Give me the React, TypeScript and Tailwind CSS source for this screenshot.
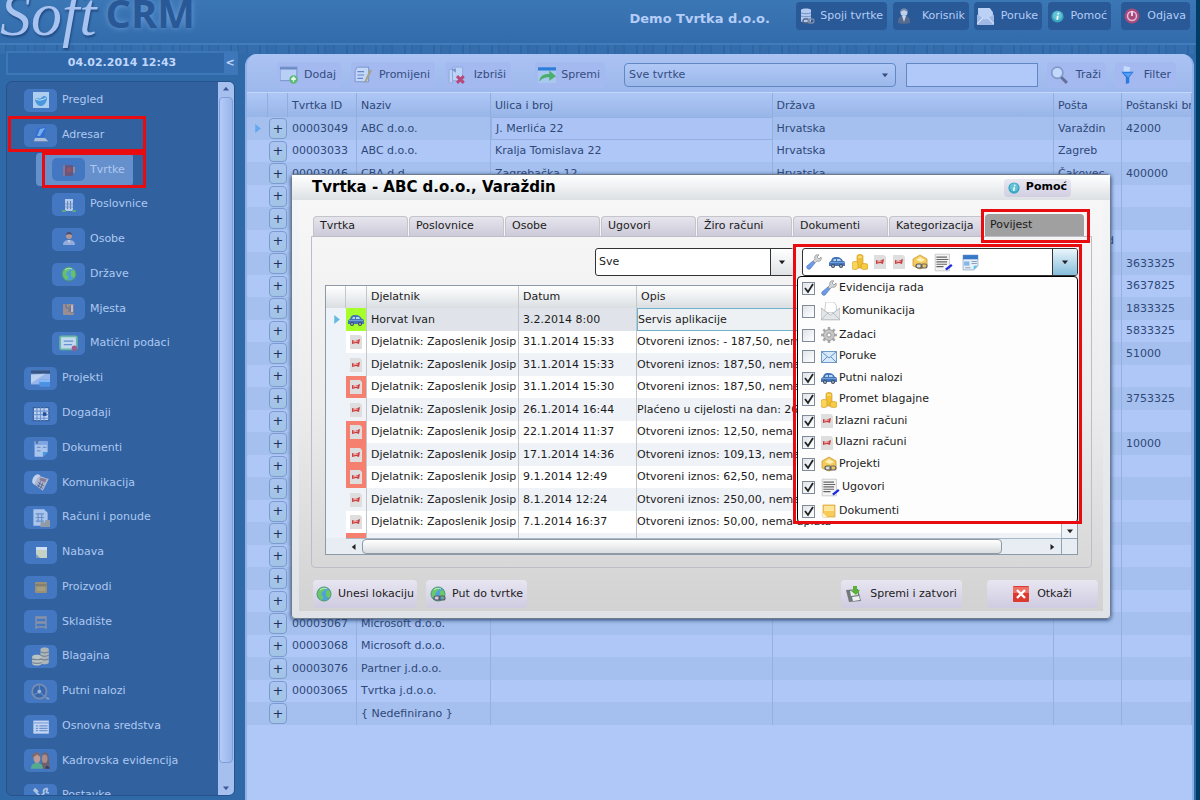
import { useState } from "react";
import type { ReactNode } from "react";
import clsx from "clsx";

type IconName =
  | "picture" | "laptop" | "book" | "building" | "person" | "globe" | "place" | "certificate"
  | "windows" | "calendar" | "doc" | "phone" | "invoice" | "note" | "box" | "shelf" | "coins"
  | "wheel" | "list" | "people" | "tools" | "server" | "user" | "mail" | "info" | "power"
  | "add" | "edit" | "remove" | "save" | "search" | "filter" | "wrench" | "car" | "gold"
  | "receipt" | "project" | "contract" | "page" | "openMail" | "gear" | "envelope" | "sticky"
  | "globeLink" | "disk" | "close";

const globe = (
  <>
    <circle cx="8" cy="8" r="7" fill="#4fa3d8" stroke="#4c9c66" />
    <path d="M2 6c1-3 4-5 6-4l1 2-3 2-1 3 2 1v3l-2 1C3 12 1 9 2 6zM10 5l3-1c2 3 2 6 0 8l-3-2z" fill="#6cc866" />
    <path d="M4 4c2-2 5-2 7-1" stroke="#c9efd2" fill="none" />
  </>
);

const ICONS: Record<IconName, ReactNode> = {
  picture: (
    <>
      <rect width="16" height="16" fill="#b9d8f5" />
      <path d="M2 8c2-4 4 0 6-2s4-3 6 0c0 4-3 8-6 8S3 12 2 8z" fill="#4a9be0" />
      <path d="M3 7c3 2 6 1 10-1" stroke="#e6f5ff" fill="none" />
    </>
  ),
  laptop: (
    <>
      <path d="M5 1 13 0l-2 10H2z" fill="#2e6fd6" />
      <path d="M7 2 12 1l-5 8H4z" fill="#7fb2f2" />
      <path d="M2 11h10l3 3H1z" fill="#b4c6e2" />
      <path d="M1 14h14v1H1z" fill="#7089b5" />
    </>
  ),
  book: (
    <>
      <rect x="3" y="3" width="9" height="11" rx="1" fill="#6c5578" />
      <rect x="2" y="3" width="2" height="11" fill="#8a7795" />
      <circle cx="8" cy="8" r="2.5" fill="#9d5261" />
      <path d="M12 5h2v6h-2z" fill="#9c8f92" />
    </>
  ),
  building: (
    <>
      <path d="M4 2h8v12H4z" fill="#bed3f0" />
      <path d="M6 4h1v8H6zM9 4h1v8H9z" fill="#6484b8" />
      <path d="M1 13h4v2H1zM11 13h4v2h-4z" fill="#5fae7c" />
      <path d="M4 7h8M4 10h8" stroke="#7f9ccd" />
    </>
  ),
  person: (
    <>
      <circle cx="8" cy="5" r="3" fill="#c29c8d" />
      <path d="M5 4c0-4 6-4 6 0l-3-1z" fill="#4e4763" />
      <path d="M2 14c0-4 3-5 6-5s6 1 6 5z" fill="#9cb2dc" />
      <path d="M7 9h2l-1 4z" fill="#d4e0f4" />
    </>
  ),
  globe,
  place: (
    <>
      <rect x="2" y="3" width="11" height="11" rx="1" fill="#a3928f" />
      <path d="M5 3v4h3v4M9 5h4v6h-3z" stroke="#6e6a87" fill="none" />
      <path d="M10 4h2v7h-2z" fill="#bdc6d6" />
    </>
  ),
  certificate: (
    <>
      <rect x="1" y="2" width="14" height="11" rx="1" fill="#cfe3f5" stroke="#6cc0a2" strokeWidth="1.5" />
      <path d="M4 6h8M4 9h7" stroke="#6b93d4" />
      <circle cx="13" cy="12" r="2.3" fill="#a7598a" />
    </>
  ),
  windows: (
    <>
      <rect x="0" y="1" width="16" height="12" fill="#9ebcf0" />
      <path d="M0 1h16v3H0z" fill="#34517f" />
      <path d="M0 5 12 4 0 12z" fill="#cadbf5" />
      <rect x="7" y="9" width="9" height="6" rx="1" fill="#4c94e8" />
      <path d="M7 9h9v2H7z" fill="#8dc0fa" />
    </>
  ),
  calendar: (
    <>
      <rect x="2" y="3" width="13" height="11" fill="#cfe0fa" stroke="#365c99" />
      <path d="M2 6h13M2 9h13M2 12h13M5 3v11M8 3v11M11 3v11" stroke="#7098d3" />
      <rect x="10" y="7" width="3" height="3" fill="#254d91" />
    </>
  ),
  doc: (
    <>
      <path d="M3 2h11v9l-4 4H3z" fill="#b5cdf1" />
      <path d="M3 2h11v3H3z" fill="#86abe8" />
      <path d="M10 15v-4h4z" fill="#3ea0e2" />
      <path d="M5 7h3M5 10h3M10 7h3" stroke="#7797cc" />
      <path d="M4 0h2v4H4z" fill="#56719f" />
    </>
  ),
  phone: (
    <>
      <path d="M6 2 15 5l-5 10-8-6z" fill="#b7bdd0" />
      <path d="M1 8c0-4 2-7 5-7l2 1C5 4 4 6 3 10z" fill="#cddcf3" />
      <path d="M8 4l5 1-1 3-5-2z" fill="#8e7d94" />
      <path d="M6 8l5 3M5 10l5 3M8 7l-2 5M10 8l-2 5" stroke="#5d688c" strokeWidth=".8" />
    </>
  ),
  invoice: (
    <>
      <path d="M2 1h9l3 3v11H2z" fill="#b6cef0" />
      <path d="M4 5h7M4 8h7M4 11h7M6 5v7M9 5v7" stroke="#6e94cb" />
      <path d="M8 12h4v4H8zM12 10h4v6h-4z" fill="#9aa0a6" />
    </>
  ),
  note: (
    <>
      <path d="M3 3h11v11H3z" fill="#d1dcc6" />
      <path d="M3 3h11v3H3z" fill="#dcebf6" />
      <path d="M3 10l4 4H3z" fill="#7fa6c0" />
    </>
  ),
  box: (
    <>
      <rect x="2" y="3" width="12" height="11" rx="1" fill="#a0936f" />
      <path d="M2 6h12" stroke="#75705f" />
      <rect x="4" y="8" width="8" height="4" fill="#b1a37b" />
    </>
  ),
  shelf: <path d="M3 2v13M13 2v13M3 4h10M3 9h10M3 13h10M4 8h8M4 3h8" stroke="#8e96a5" strokeWidth="1.4" fill="none" />,
  coins: (
    <>
      <path d="M8 2c0-2 7-2 7 0v11c0 2-7 2-7 0z" fill="#b9bcb5" />
      <path d="M1 8c0-2 8-2 8 0v6c0 2-8 2-8 0z" fill="#cacdc4" />
      <path d="M8 4c2 1 5 1 7 0M8 7c2 1 5 1 7 0M8 10c2 1 5 1 7 0M1 10c2 1 6 1 8 0M1 13c2 1 6 1 8 0" stroke="#7d8691" fill="none" />
    </>
  ),
  wheel: (
    <>
      <circle cx="7" cy="8" r="6" fill="#3766ad" stroke="#7f90ae" strokeWidth="1.5" />
      <circle cx="7" cy="8" r="1.6" fill="#a8bddd" />
      <path d="M7 2v4M2 11l4-2M8 9l5 5" stroke="#6d8fc4" />
      <path d="M12 12l4 2-2 1z" fill="#9da7b8" />
    </>
  ),
  list: (
    <>
      <path d="M2 3h13v11H2z" fill="#d0e0f8" />
      <path d="M2 5h13" stroke="#86a8dd" />
      <path d="M4 7.500h2M7 7.500h7M4 9.500h2M7 9.500h7M4 11.500h2M7 11.500h7" stroke="#7396cf" />
    </>
  ),
  people: (
    <>
      <path d="M9 5c0-6 6-5 6 1l1 9H9z" fill="#735f67" />
      <ellipse cx="11.500" cy="6.500" rx="2.400" ry="3.600" fill="#b99083" />
      <ellipse cx="5" cy="6" rx="2.800" ry="4" fill="#c9a08f" />
      <path d="M1 6c0-6 7-6 7-1L5 3z" fill="#85675f" />
      <path d="M0 15c0-4 2-5 5-5s5 1 5 5z" fill="#55b28a" />
      <path d="M12 15c0-4 3-3 4 0z" fill="#343f66" />
    </>
  ),
  tools: <path d="M2 3l12 12M3 2l3 3M14 2c-3 0-4 2-3 4L3 14M14 2l-1 3 2 1" stroke="#b9cbe8" strokeWidth="1.5" fill="none" />,
  server: (
    <>
      <path d="M2 2c0-2 10-2 10 0v11c0 2-10 2-10 0z" fill="#b4cbf1" />
      <path d="M2 5c3 1 7 1 10 0M2 8c3 1 7 1 10 0" stroke="#6f8dbd" fill="none" />
      <rect x="4" y="11" width="6" height="4" rx="2" fill="none" stroke="#51617f" strokeWidth="1.300" />
      <rect x="9" y="11" width="6" height="4" rx="2" fill="none" stroke="#7c8ca9" strokeWidth="1.300" />
    </>
  ),
  user: (
    <>
      <path d="M2 15c0-5 1-7 6-7s6 2 6 7c-2 1-10 1-12 0z" fill="#566b8f" />
      <circle cx="8" cy="4.500" r="3.500" fill="#c2cfe9" />
      <path d="M6 8h4l-2 6z" fill="#c8d6ee" />
      <path d="M4 4c0-5 8-5 8 0L8 2z" fill="#7085ad" />
    </>
  ),
  mail: (
    <>
      <path d="M1 0h11l3 4v11H1z" fill="#bcd1f6" />
      <path d="M0 6l8 5 8-5v10H0z" fill="#9fb8e4" />
      <path d="M0 15l6-6M16 15l-6-6" stroke="#dae7ff" />
    </>
  ),
  info: (
    <>
      <circle cx="8" cy="8" r="7.500" fill="#39a7c2" />
      <circle cx="8" cy="7" r="5.500" fill="#65c3d6" />
      <path d="M7.200 7h2.300l-1 5H6.700zM8.200 3.500h2l-.4 2h-2z" fill="#fff" />
    </>
  ),
  power: (
    <>
      <circle cx="8" cy="8" r="7.500" fill="#a94b78" />
      <circle cx="8" cy="8" r="4.500" fill="none" stroke="#e0b9dc" strokeWidth="1.500" />
      <path d="M8 3v5" stroke="#f1dff5" strokeWidth="1.800" />
    </>
  ),
  add: (
    <>
      <rect x="0" y="1" width="15" height="12" fill="#b9d0f6" stroke="#7d9ad0" />
      <path d="M0 1h15v2H0z" fill="#6e8ac5" />
      <circle cx="12" cy="12" r="3.700" fill="#5bb878" />
      <path d="M12 14v-4M10 12l2-2 2 2" stroke="#e5f8ed" strokeWidth="1.300" fill="none" />
    </>
  ),
  edit: (
    <>
      <path d="M3 1h10v13H1V4z" fill="#c3d7f8" stroke="#7592ca" strokeWidth=".8" />
      <path d="M3 5h6M3 8h6M3 11h5" stroke="#6686c6" />
      <path d="M14 3l2 1-5 10-2 1 1-3z" fill="#a8a384" />
    </>
  ),
  remove: (
    <>
      <path d="M4 1h9v12H4zM1 3h3v12H1z" fill="#bdd2f7" stroke="#8ba6d8" strokeWidth=".7" />
      <path d="M3 3l4-1v4z" fill="#7895cf" />
      <path d="M8 9l6 6M14 9l-6 6" stroke="#b8487c" strokeWidth="2.600" />
    </>
  ),
  save: (
    <>
      <path d="M0 1h16v14H0z" fill="#a9c8ee" />
      <path d="M0 1h16v3H0z" fill="#2f7ddb" />
      <path d="M1 14c1-6 4-7 9-7V4l6 5-6 4v-3c-4 0-6 1-9 4z" fill="#4aae6d" />
    </>
  ),
  search: (
    <>
      <circle cx="6.500" cy="6" r="5" fill="#c2d9fb" stroke="#8099c8" strokeWidth="1.500" />
      <path d="M10 10l5 5" stroke="#63709a" strokeWidth="2.600" />
    </>
  ),
  filter: (
    <>
      <path d="M5 0l6 1-1 5H5z" fill="#c3dcfb" />
      <path d="M3 5h11l-4 5v5l-3 1v-6z" fill="#2b7ae2" />
      <path d="M4 5c2 2 7 2 9 0l-4 5z" fill="#5ca3f3" />
    </>
  ),
  wrench: (
    <>
      <path d="M1 12l6-5 2 2-5 6c-2 1-4-1-3-3z" fill="#6d9bea" stroke="#4c72b5" strokeWidth=".7" />
      <path d="M7 7l2-2c-1-3 1-5 4-4l-2 2 2 2 2-2c1 3-1 5-4 4L9 9z" fill="#d2d5da" stroke="#888" strokeWidth=".7" />
    </>
  ),
  car: (
    <>
      <path d="M2 7c1-4 3-4 6-4s4 1 6 4c2 0 2 1 2 5H0C0 8 0 8 2 7z" fill="#4474b8" />
      <path d="M4 7l1-2h2v2zM8 5h3l1 2H8z" fill="#b5d4f1" />
      <path d="M1 8h14v1H1z" fill="#75a1da" />
      <circle cx="4" cy="12" r="2" fill="#3a4c66" />
      <circle cx="12" cy="12" r="2" fill="#3a4c66" />
      <circle cx="4" cy="12" r=".9" fill="#bbb" />
      <circle cx="12" cy="12" r=".9" fill="#bbb" />
    </>
  ),
  gold: (
    <>
      <path d="M5 2c0-2 6-2 6 0v12H5z" fill="#f2c036" stroke="#cf941e" strokeWidth=".6" />
      <path d="M0 9c0-2 6-2 6 0v5c0 2-6 2-6 0z" fill="#f9d65b" stroke="#cf941e" strokeWidth=".6" />
      <path d="M9 11c0-2 7-2 7 0v3c0 2-7 2-7 0z" fill="#f6cb45" stroke="#cf941e" strokeWidth=".6" />
      <path d="M6 3h4" stroke="#fff0a4" />
    </>
  ),
  receipt: (
    <>
      <path d="M2 1h10l2 2v12H2z" fill="#dedede" />
      <path d="M4 6l3 1 5-2-1 5-3-1-4 1z" fill="#cc3c3c" />
      <path d="M5 8l5-1" stroke="#eab0b0" />
    </>
  ),
  project: (
    <>
      <path d="M1 5l7-4 7 4v7l-7 3-7-3z" fill="#f3ca5c" stroke="#ce9a31" strokeWidth=".8" />
      <path d="M4 6l4-3 5 3-4 2z" fill="#fff1b5" />
      <rect x="4" y="10" width="6" height="4" rx="2" fill="#ddd" stroke="#555" strokeWidth="1.200" />
      <rect x="9" y="10" width="6" height="4" rx="2" fill="none" stroke="#666" strokeWidth="1.200" />
    </>
  ),
  contract: (
    <>
      <path d="M1 1h12v14H1z" fill="#f4f4f4" stroke="#bbb" strokeWidth=".6" />
      <path d="M2 3.500h9M2 5.500h10M2 7.500h9M2 9.500h9M2 11.500h6" stroke="#666" strokeWidth=".9" />
      <path d="M10 14l5-4" stroke="#1d2be0" strokeWidth="2" />
    </>
  ),
  page: (
    <>
      <path d="M1 1h14v10l-4 4H1z" fill="#e8eff7" stroke="#8ca3bf" strokeWidth=".7" />
      <path d="M1 1h14v4H1z" fill="#3779c9" />
      <path d="M2 7h5v4H2z" fill="#84b6e6" />
      <path d="M9 7h5M9 9h5M3 13h5" stroke="#8aa1bd" />
      <path d="M11 15v-4h4z" fill="#5dc0e6" />
    </>
  ),
  openMail: (
    <>
      <path d="M4 0h7l2 3v6H3z" fill="#fff" stroke="#bbb" strokeWidth=".6" />
      <path d="M0 5l8 6 8-6v10H0z" fill="#e3e6e9" stroke="#a9adb2" strokeWidth=".7" />
      <path d="M0 15l6-6M16 15l-6-6" stroke="#b4b9c0" strokeWidth=".8" />
    </>
  ),
  gear: (
    <>
      <path d="M8 0v16M0 8h16M2.300 2.300l11.400 11.400M13.700 2.300 2.300 13.700" stroke="#a8a8a8" strokeWidth="2.600" />
      <circle cx="8" cy="8" r="5.500" fill="#c6c6c6" stroke="#989898" strokeWidth=".8" />
      <circle cx="8" cy="8" r="2" fill="#fff" stroke="#888" strokeWidth=".8" />
    </>
  ),
  envelope: (
    <>
      <rect x=".5" y="2.500" width="15" height="11" fill="#d7e9f8" stroke="#6f9ac6" />
      <path d="M1 3l7 6 7-6M1 13l5-5M15 13l-5-5" stroke="#5f92c7" fill="none" />
    </>
  ),
  sticky: (
    <>
      <path d="M2 2h12v12H2z" fill="#f7cb57" stroke="#d79f30" strokeWidth=".7" />
      <path d="M3 3h10v5H3z" fill="#fde59b" />
      <path d="M2 10l4 4H2z" fill="#fff6d6" />
    </>
  ),
  globeLink: (
    <>
      {globe}
      <rect x="4" y="10" width="6" height="4" rx="2" fill="#ccd" stroke="#556" strokeWidth="1.200" />
      <rect x="9" y="10" width="6" height="4" rx="2" fill="none" stroke="#556" strokeWidth="1.200" />
    </>
  ),
  disk: (
    <>
      <path d="M0 4l12-1 3 12-12 1z" fill="#73787c" />
      <path d="M4 5l7-1 1 5-7 1zM6 11l7-1 1 4-7 1z" fill="#edf0f1" />
      <path d="M7 0h4v4h3l-4 5-5-4h2z" fill="#58b238" />
    </>
  ),
  close: (
    <>
      <rect width="16" height="16" rx="1" fill="#dc3a30" />
      <path d="M0 1h16v6H0z" fill="#ee7168" />
      <path d="M4 4l8 8M12 4l-8 8" stroke="#fff" strokeWidth="2.400" />
    </>
  ),
};

function Icon({ name, className = "size-4" }: { name: IconName; className?: string }) {
  return (
    // the receipt is a narrow sheet, so its box is narrower than the others
    <svg viewBox={name === "receipt" ? "2 0 12 16" : "0 0 16 16"} aria-hidden className={clsx("shrink-0", className)}>
      {ICONS[name]}
    </svg>
  );
}

function Arrow({ dir, className = "size-2" }: { dir: "up" | "down" | "left" | "right"; className?: string }) {
  const d = {
    up: "M0 6h8L4 1z",
    down: "M0 2h8L4 7z",
    left: "M6 0v8L1 4z",
    right: "M2 0v8l5-4z",
  }[dir];
  return (
    <svg viewBox="0 0 8 8" aria-hidden className={clsx("fill-current", className)}>
      <path d={d} />
    </svg>
  );
}

/** Red rectangle that marks the step being explained. */
function Marker({ className }: { className: string }) {
  return <div aria-hidden className={clsx("pointer-events-none absolute border-[3px] border-[#e80c10]", className)} />;
}

interface NavItem {
  label: string;
  icon: IconName;
  sub?: boolean;
  small?: boolean;
}

const NAV: NavItem[] = [
  { label: "Pregled", icon: "picture", small: true },
  { label: "Adresar", icon: "laptop", small: true },
  { label: "Tvrtke", icon: "book", sub: true, small: true },
  { label: "Poslovnice", icon: "building", sub: true, small: true },
  { label: "Osobe", icon: "person", sub: true, small: true },
  { label: "Države", icon: "globe", sub: true, small: true },
  { label: "Mjesta", icon: "place", sub: true, small: true },
  { label: "Matični podaci", icon: "certificate", sub: true },
  { label: "Projekti", icon: "windows" },
  { label: "Događaji", icon: "calendar" },
  { label: "Dokumenti", icon: "doc" },
  { label: "Komunikacija", icon: "phone" },
  { label: "Računi i ponude", icon: "invoice" },
  { label: "Nabava", icon: "note", small: true },
  { label: "Proizvodi", icon: "box", small: true },
  { label: "Skladište", icon: "shelf", small: true },
  { label: "Blagajna", icon: "coins" },
  { label: "Putni nalozi", icon: "wheel" },
  { label: "Osnovna sredstva", icon: "list" },
  { label: "Kadrovska evidencija", icon: "people" },
  { label: "Postavke", icon: "tools" },
];

function Sidebar() {
  return (
    <aside className="flex w-[232px] shrink-0 flex-col pb-1">
      <div className="flex h-6 border-2 border-[#3d77b8] bg-[#2f67a8]">
        <time className="flex-1 pl-3 text-center text-[11px] leading-5 font-bold text-[#c0d6fb]">04.02.2014 12:43</time>
        <button type="button" aria-label="Sakrij izbornik" className="w-3 bg-[#3f78ba] text-[11px] font-bold text-[#c0d6fb]">
          &lt;
        </button>
      </div>
      <div className="mt-[6px] flex min-h-0 w-[229px] flex-1 overflow-hidden rounded-md border border-[#28528b] bg-[#31629f]">
        <nav className="min-w-0 flex-1 overflow-hidden">
          <ul className="mt-px flex h-[730px] flex-col">
            {NAV.map((item) => (
              <li key={item.label} className="relative flex flex-1 items-center">
                <a
                  href="#"
                  className={clsx(
                    "flex items-center gap-[5px] rounded-sm text-[11px] text-[#aec8f2]",
                    item.sub ? "ml-[29px] pl-4" : "ml-[17px]",
                    item.label === "Tvrtke" && "h-[33px] bg-[#6690cb] pr-2",
                  )}
                >
                  <span className="flex h-[23px] w-[33px] items-center justify-center rounded-[5px] bg-[#4477c1]">
                    <Icon name={item.icon} className={clsx("opacity-90", item.small ? "size-4" : "size-[19px]")} />
                  </span>
                  {item.label}
                </a>
                {item.label === "Adresar" && <Marker className="-top-[2px] left-px h-9 w-[138px]" />}
                {item.label === "Tvrtke" && <Marker className="-top-px left-[35px] h-9 w-[104px]" />}
              </li>
            ))}
          </ul>
        </nav>
        <div className="flex w-4 flex-col items-center bg-[#a5bfef] text-[#3c5b97]">
          <Arrow dir="up" className="my-1 size-[6px]" />
          <div className="mt-px w-[14px] flex-1 rounded-sm border border-[#7d9fdc] bg-linear-to-r from-[#b4cbf8] to-[#98b5ea]" />
          <Arrow dir="down" className="mt-[22px] mb-1 size-[6px]" />
        </div>
      </div>
    </aside>
  );
}

const HEADER_ACTIONS: { label: string; icon: IconName; className: string }[] = [
  { label: "Spoji tvrtke", icon: "server", className: "w-[91px]" },
  { label: "Korisnik", icon: "user", className: "ml-[6px] w-[76px]" },
  { label: "Poruke", icon: "mail", className: "ml-[5px] w-[68px]" },
  { label: "Pomoć", icon: "info", className: "ml-[6px] w-[63px]" },
  { label: "Odjava", icon: "power", className: "ml-[10px] w-[69px]" },
];

function Header() {
  return (
    <header className="relative flex h-[51px] shrink-0 items-start justify-between bg-linear-to-b from-[#3b76b5] to-[#316aaa]">
      {/* tiled band under the title */}
      <div
        aria-hidden
        className="absolute inset-x-0 top-[43px] h-[11px] border-t-2 border-[#417cbb] bg-[repeating-linear-gradient(90deg,#366fae_0px,#366fae_5px,#3068a7_5px,#3068a7_7px,#336bab_7px,#336bab_14px,#3068a7_14px,#3068a7_16px,#356eae_16px,#356eae_27px,#2e66a5_27px,#2e66a5_29px)]"
      />
      <h1 className="relative flex h-[51px] items-end leading-none">
        <span className="-mt-6 pb-[6px] font-['Liberation_Serif',serif] text-[62px] text-[#a9c3f0] italic text-shadow-[1px_2px_2px_#204b83]">Soft</span>
        <span className="ml-[9px] pb-[18px] font-['Open_Sans',sans-serif] text-[40px] font-bold text-[#285896] text-shadow-[0_0_6px_#6f9fd9]">
          CRM
        </span>
      </h1>
      <div className="flex pr-[6px] text-[11px] text-[#b4cdf8]">
        <p className="mt-[9px] mr-[26px] text-[13px] leading-5 font-bold">Demo Tvrtka d.o.o.</p>
        {HEADER_ACTIONS.map((a) => (
          <button
            key={a.label}
            type="button"
            className={clsx("mt-[2px] flex h-7 items-center justify-between rounded-sm bg-[#2a5997] pr-1 pl-[3px] whitespace-nowrap", a.className)}
          >
            <Icon name={a.icon} className={a.icon === "mail" ? "size-[17px]" : a.icon === "info" ? "size-[13px]" : "size-4"} />
            {a.label}
          </button>
        ))}
      </div>
    </header>
  );
}

function ToolButton({ label, icon, className }: { label: string; icon: IconName; className: string }) {
  return (
    <button
      type="button"
      className={clsx("flex h-[26px] items-center justify-between rounded-sm bg-[#a3b9f0] pr-[5px] pl-[3px]", className)}
    >
      <Icon name={icon} className="size-[18px]" />
      {label}
    </button>
  );
}

interface Company {
  id: string;
  name: string;
  street?: string;
  country?: string;
  city?: string;
  zip?: string;
}

const zips = ["", "", "", "3633325", "3637825", "1833325", "5833325", "51000", "", "3753325", "", "10000", "", "", "", "", "", "", ""];

const COMPANIES: Company[] = [
  { id: "00003049", name: "ABC d.o.o.", street: "J. Merlića 22", country: "Hrvatska", city: "Varaždin", zip: "42000" },
  { id: "00003033", name: "ABC d.o.o.", street: "Kralja Tomislava 22", country: "Hrvatska", city: "Zagreb" },
  { id: "00003046", name: "CBA d.d.", street: "Zagrebačka 12", country: "Hrvatska", city: "Čakovec", zip: "400000" },
  ...zips.map((zip, i) => ({ id: "", name: "", city: i === 2 ? "Stari Grad" : "", zip })),
  { id: "00003067", name: "Microsoft d.o.o." },
  { id: "00003068", name: "Microsoft d.o.o." },
  { id: "00003076", name: "Partner j.d.o.o." },
  { id: "00003065", name: "Tvrtka j.d.o.o." },
  { id: "", name: "{ Nedefinirano }" },
];

function CompanyTable() {
  const th = "border-r border-[#8fadde] px-1 pt-[2px] text-left font-normal whitespace-nowrap";
  const td = "overflow-hidden border-r border-[#94b0e2] px-1 whitespace-nowrap";
  return (
    <table className="w-full table-fixed border-separate border-spacing-0 text-[11px] leading-4 text-[#2f4878]">
      <colgroup>
        <col className="w-[21px]" />
        <col className="w-5" />
        <col className="w-[69px]" />
        <col className="w-[134px]" />
        <col />
        <col />
        <col className="w-[68px]" />
        <col className="w-[70px]" />
      </colgroup>
      <thead>
        <tr className="h-6 bg-linear-to-b from-[#aec7f6] to-[#98b5e8]">
          <th className={th} aria-label="Odabir" />
          <th className={th} aria-label="Proširi" />
          <th className={th}>Tvrtka ID</th>
          <th className={th}>Naziv</th>
          <th className={th}>Ulica i broj</th>
          <th className={th}>Država</th>
          <th className={th}>Pošta</th>
          <th className={clsx(th, "overflow-hidden")}>Poštanski broj</th>
        </tr>
      </thead>
      <tbody>
        {COMPANIES.map((c, i) => (
          <tr key={i} className="odd:h-[23px] odd:bg-[#a5c0ef] even:h-[22px] even:bg-[#aec7f7]">
            <td className="text-center text-[#63a8ec]">{i === 0 && <Arrow dir="right" className="ml-[6px] size-[9px]" />}</td>
            <td className="p-0">
              <button
                type="button"
                aria-label="Proširi"
                className="mx-auto block h-[21px] w-[18px] rounded-sm border border-[#7b9bd0] bg-linear-to-b from-[#aac5f1] to-[#a2c4e4] text-[13px] leading-[18px] text-[#1e3158]"
              >
                +
              </button>
            </td>
            <td className={td}>{c.id}</td>
            <td className={td}>{c.name}</td>
            <td className={clsx(td, i === 0 && "border border-[#6ba3e6] bg-[#abc4f5]")}>{c.street}</td>
            <td className={td}>{c.country}</td>
            <td className={td}>{c.city}</td>
            <td className={td}>{c.zip}</td>
          </tr>
        ))}
      </tbody>
    </table>
  );
}

function Workspace() {
  return (
    <main className="mt-[3px] ml-[7px] flex min-w-0 flex-1 flex-col overflow-hidden rounded-t-xl border-x-2 border-[#8fb1ea] bg-[#b0c8f7]">
      <div className="flex h-[39px] shrink-0 items-center border-b border-[#c3d6fb] bg-linear-to-b from-[#abc3f3] to-[#9db8ec] pt-1 pl-[30px] text-[11px] text-[#344d80]">
        <ToolButton label="Dodaj" icon="add" className="w-16" />
        <ToolButton label="Promijeni" icon="edit" className="ml-[10px] w-[84px]" />
        <ToolButton label="Izbriši" icon="remove" className="ml-[10px] w-[66px]" />
        <ToolButton label="Spremi" icon="save" className="ml-[24px] w-[70px]" />
        <label className="relative ml-[19px] min-w-0 flex-1">
          <select aria-label="Prikaz" className="h-6 w-full appearance-none rounded-sm border border-[#6288c4] bg-linear-to-b from-[#b0c8f6] to-[#9bb8ea] px-1">
            <option>Sve tvrtke</option>
          </select>
          <Arrow dir="down" className="absolute top-[9px] right-2 size-[6px]" />
        </label>
        <input aria-label="Pretraga" className="ml-[10px] h-6 w-[132px] border border-[#6288c4] bg-[#b1c9f8] px-1" />
        <ToolButton label="Traži" icon="search" className="ml-[9px] w-[59px]" />
        <ToolButton label="Filter" icon="filter" className="mr-4 ml-[9px] w-[61px]" />
      </div>
      <CompanyTable />
    </main>
  );
}

interface HistoryRow {
  who: string;
  when: string;
  text: string;
  mark?: "trip" | "due";
}

const staff = "Djelatnik: Zaposlenik Josip";

const HISTORY: HistoryRow[] = [
  { who: "Horvat Ivan", when: "3.2.2014 8:00", text: "Servis aplikacije", mark: "trip" },
  { who: staff, when: "31.1.2014 15:33", text: "Otvoreni iznos: - 187,50, nema uplata" },
  { who: staff, when: "31.1.2014 15:33", text: "Otvoreni iznos: 187,50, nema uplata" },
  { who: staff, when: "31.1.2014 15:30", text: "Otvoreni iznos: 187,50, nema uplata", mark: "due" },
  { who: staff, when: "26.1.2014 16:44", text: "Plaćeno u cijelosti na dan: 26.1.2014" },
  { who: staff, when: "22.1.2014 11:37", text: "Otvoreni iznos: 12,50, nema uplata", mark: "due" },
  { who: staff, when: "17.1.2014 14:36", text: "Otvoreni iznos: 109,13, nema uplata", mark: "due" },
  { who: staff, when: "9.1.2014 12:49", text: "Otvoreni iznos: 62,50, nema uplata", mark: "due" },
  { who: staff, when: "8.1.2014 12:24", text: "Otvoreni iznos: 250,00, nema uplata" },
  { who: staff, when: "7.1.2014 16:37", text: "Otvoreni iznos: 50,00, nema uplata" },
  { who: "", when: "", text: "", mark: "due" },
];

function HistoryTable() {
  const cell = "border-r border-[#c3c6ca] px-1 whitespace-nowrap";
  return (
    <div className="flex h-[270px] flex-col border border-[#8c9aa8] bg-white">
      <div className="flex min-h-0 flex-1">
        <div className="min-w-0 flex-1 overflow-hidden">
          <table className="w-full table-fixed border-separate border-spacing-0 text-[11px] leading-4 text-[#1c1c1c]">
            <colgroup>
              <col className="w-5" />
              <col className="w-[21px]" />
              <col className="w-[152px]" />
              <col className="w-[118px]" />
              <col />
            </colgroup>
            <thead>
              <tr className="h-[22px] bg-linear-to-b from-white to-[#dadee2]">
                <th className={cell} aria-label="Odabir" />
                <th className={cell} aria-label="Vrsta" />
                <th className={clsx(cell, "text-left font-normal")}>Djelatnik</th>
                <th className={clsx(cell, "text-left font-normal")}>Datum</th>
                <th className={clsx(cell, "text-left font-normal")}>Opis</th>
              </tr>
            </thead>
            <tbody>
              {HISTORY.map((row, i) => (
                <tr key={i} className={clsx("odd:h-[23px] even:h-[22px]", i === 0 ? "bg-[#e0e4ea]" : "odd:bg-[#eff2f7]")}>
                  <td className="bg-[#eef3f9]">{i === 0 && <Arrow dir="right" className="ml-[6px] size-[9px] text-[#66bade]" />}</td>
                  <td
                    className={clsx(
                      "border-r border-[#c3c6ca] p-0",
                      row.mark === "trip" && "bg-[#a6ff2b]",
                      row.mark === "due" && "bg-[#f5806f]",
                    )}
                  >
                    <Icon name={row.mark === "trip" ? "car" : "receipt"} className={row.mark === "trip" ? "mx-auto size-4" : "mx-auto h-4 w-3"} />
                  </td>
                  <td className={cell}>{row.who}</td>
                  <td className={cell}>{row.when}</td>
                  <td className={clsx("overflow-hidden p-0 whitespace-nowrap", i === 0 && "border border-[#6fb3cb] bg-[#edf1f3]")}>{row.text}</td>
                </tr>
              ))}
            </tbody>
          </table>
        </div>
        <div className="flex w-4 flex-col items-center justify-between border-l border-[#a9b8c6] bg-[#eef2f6] py-1 text-[#222]">
          <Arrow dir="up" className="size-[6px]" />
          <Arrow dir="down" className="size-[6px]" />
        </div>
      </div>
      <div className="flex h-4 bg-[#e7edf3] text-[#222]">
        <div className="ml-5 flex flex-1 items-center border-t border-[#a9b8c6]">
          <Arrow dir="left" className="mx-[5px] size-[6px]" />
          <div className="h-[15px] w-[640px] rounded-sm border border-[#8e9aa6] bg-linear-to-b from-white to-[#d9dde0]" />
          <Arrow dir="right" className="mr-[6px] ml-auto size-[6px]" />
        </div>
        <div className="w-4 border-t border-l border-[#8ea2b5]" />
      </div>
    </div>
  );
}

interface Kind {
  label: string;
  icon: IconName;
  on: boolean;
  row: string;
  size: string;
}

const KINDS: Kind[] = [
  { label: "Evidencija rada", icon: "wrench", on: true, row: "h-[22px]", size: "size-4" },
  { label: "Komunikacija", icon: "openMail", on: false, row: "h-[25px]", size: "size-[19px]" },
  { label: "Zadaci", icon: "gear", on: false, row: "h-[22px]", size: "size-4" },
  { label: "Poruke", icon: "envelope", on: false, row: "h-[21px]", size: "size-4" },
  { label: "Putni nalozi", icon: "car", on: true, row: "h-[22px]", size: "size-4" },
  { label: "Promet blagajne", icon: "gold", on: true, row: "h-[21px]", size: "size-4" },
  { label: "Izlazni računi", icon: "receipt", on: true, row: "h-[22px]", size: "h-4 w-3" },
  { label: "Ulazni računi", icon: "receipt", on: true, row: "h-[21px]", size: "h-4 w-3" },
  { label: "Projekti", icon: "project", on: true, row: "h-[22px]", size: "size-4" },
  { label: "Ugovori", icon: "contract", on: true, row: "h-[25px]", size: "size-[19px]" },
  { label: "Dokumenti", icon: "sticky", on: true, row: "h-[22px]", size: "size-4" },
];

function KindPicker() {
  const [kinds, setKinds] = useState(KINDS);
  const toggle = (label: string) =>
    setKinds((prev) => prev.map((k) => (k.label === label ? { ...k, on: !k.on } : k)));

  return (
    <div className="relative w-[276px]">
      <button
        type="button"
        aria-expanded
        aria-label="Vrste zapisa"
        className="flex h-7 w-full items-center overflow-hidden rounded-[3px] border border-[#333] bg-white pl-[3px]"
      >
        <span className="flex flex-1 items-center">
          <Icon name="wrench" className="size-4" />
          <Icon name="car" className="ml-[7px] size-4" />
          <Icon name="gold" className="ml-[7px] size-4" />
          <Icon name="receipt" className="ml-[6px] h-4 w-3" />
          <Icon name="receipt" className="ml-[7px] h-4 w-3" />
          <Icon name="project" className="ml-[7px] size-4" />
          <Icon name="contract" className="ml-[6px] size-[19px]" />
          <Icon name="page" className="ml-[9px] size-[17px]" />
        </span>
        <span className="flex h-full w-[25px] items-center justify-center border-l border-[#333] bg-linear-to-b from-[#eaf6fc] to-[#86bddc]">
          <Arrow dir="down" className="size-[6px] text-[#222]" />
        </span>
      </button>
      <div className="absolute top-[28px] right-0 z-10 w-[281px] rounded-sm border border-black bg-[#fdfdfd] text-[11px]">
        {kinds.map((k) => (
          <label key={k.label} className={clsx("flex items-center pl-1", k.row)}>
            <span className="relative size-[13px]">
              <input
                type="checkbox"
                checked={k.on}
                onChange={() => toggle(k.label)}
                className="block size-[13px] appearance-none border border-[#7f8b96] bg-linear-to-br from-[#dfe5ec] to-white"
              />
              {k.on && (
                <svg viewBox="0 0 13 13" aria-hidden className="pointer-events-none absolute inset-0">
                  <path d="M3 6l3 4 5-8" fill="none" stroke="#222" strokeWidth="1.800" />
                </svg>
              )}
            </span>
            <Icon name={k.icon} className={clsx("mr-[2px] ml-[6px]", k.size)} />
            {k.label}
          </label>
        ))}
      </div>
      <Marker className="-top-1 -right-1 z-20 h-[280px] w-[289px]" />
    </div>
  );
}

const TABS = ["Tvrtka", "Poslovnice", "Osobe", "Ugovori", "Žiro računi", "Dokumenti", "Kategorizacija"];

function DialogButton({ label, icon, className }: { label: string; icon: IconName; className: string }) {
  return (
    <button
      type="button"
      className={clsx(
        "flex h-7 items-center justify-center rounded-sm bg-linear-to-b from-[#e8e6f1] to-[#cfcbe1] text-[11px]",
        className,
      )}
    >
      <Icon name={icon} />
      {label}
    </button>
  );
}

function CompanyDialog() {
  return (
    <section
      role="dialog"
      aria-labelledby="dialog-title"
      className="absolute top-[174px] left-[291px] w-[820px] rounded-sm border border-[#6f7c8c] bg-linear-to-b from-[#f4f6f7] to-[#dfe3e7] text-[#1c1c1c] shadow-[0_1px_4px_#24406f]"
    >
      <header className="flex h-[25px] items-center justify-between bg-linear-to-b from-white to-[#dde1e4] pr-[39px] pl-5">
        <h2 id="dialog-title" className="text-[15px] font-bold text-black">
          Tvrtka - ABC d.o.o., Varaždin
        </h2>
        <button
          type="button"
          className="flex h-[18px] items-center gap-[6px] rounded-sm bg-linear-to-b from-[#e9e8f1] to-[#d1cee2] px-1 text-[11px] font-bold text-black"
        >
          <Icon name="info" className="size-3" />
          Pomoć
        </button>
      </header>
      <div className="mx-[7px] mb-[7px] bg-linear-to-b from-[#f7f7f7] via-[#ececec] to-[#d2d2d2] px-3 pt-[14px] pb-[3px]">
        <div role="tablist" className="flex items-end gap-px pl-[2px] text-[11px]">
          {TABS.map((t) => (
            <button
              key={t}
              type="button"
              role="tab"
              className="h-5 w-[95px] rounded-t-sm border border-b-0 border-[#c4c4cc] bg-linear-to-b from-[#e6e5ed] to-[#cdcad9] px-[6px] text-left whitespace-nowrap"
            >
              {t}
            </button>
          ))}
          <div className="relative">
            <button type="button" role="tab" aria-selected className="block h-[22px] w-[99px] rounded-t-sm bg-[#a0a0a0] px-[5px] text-left">
              Povijest
            </button>
            <Marker className="-top-[5px] -left-1 z-20 h-[34px] w-[109px]" />
          </div>
        </div>
        <div className="mr-[-1px] rounded-b-sm border border-[#bdbdc7] px-[13px] pt-[11px] pb-3">
          <div className="flex justify-end gap-2">
            <label className="relative w-[199px]">
              <select aria-label="Djelatnik" className="h-7 w-full appearance-none rounded-[3px] border border-[#333] bg-white px-[3px] text-[11px]">
                <option>Sve</option>
              </select>
              <span className="pointer-events-none absolute top-px right-px flex h-[26px] w-[23px] items-center justify-center border-l border-[#333] bg-linear-to-b from-white to-[#dfe3e6]">
                <Arrow dir="down" className="size-[6px]" />
              </span>
            </label>
            <KindPicker />
          </div>
          <div className="mt-[9px]">
            <HistoryTable />
          </div>
        </div>
        <div className="mt-3 flex pl-[2px]">
          <DialogButton label="Unesi lokaciju" icon="globe" className="w-[104px] gap-[6px]" />
          <DialogButton label="Put do tvrtke" icon="globeLink" className="ml-[9px] w-[101px] gap-[6px]" />
          <DialogButton label="Spremi i zatvori" icon="disk" className="ml-auto w-[121px] gap-2" />
          <DialogButton label="Otkaži" icon="close" className="-mr-[7px] ml-[25px] w-[111px] gap-2" />
        </div>
      </div>
    </section>
  );
}

export default function App() {
  return (
    <div className="relative h-screen overflow-hidden bg-[#003d66] pr-1 font-['DejaVu_Sans',Verdana,sans-serif]">
      <div className="flex h-full flex-col bg-[#2f69a8]">
        <Header />
        <div className="relative flex min-h-0 flex-1 pr-[2px] pl-[6px]">
          <Sidebar />
          <Workspace />
        </div>
      </div>
      <CompanyDialog />
    </div>
  );
}
